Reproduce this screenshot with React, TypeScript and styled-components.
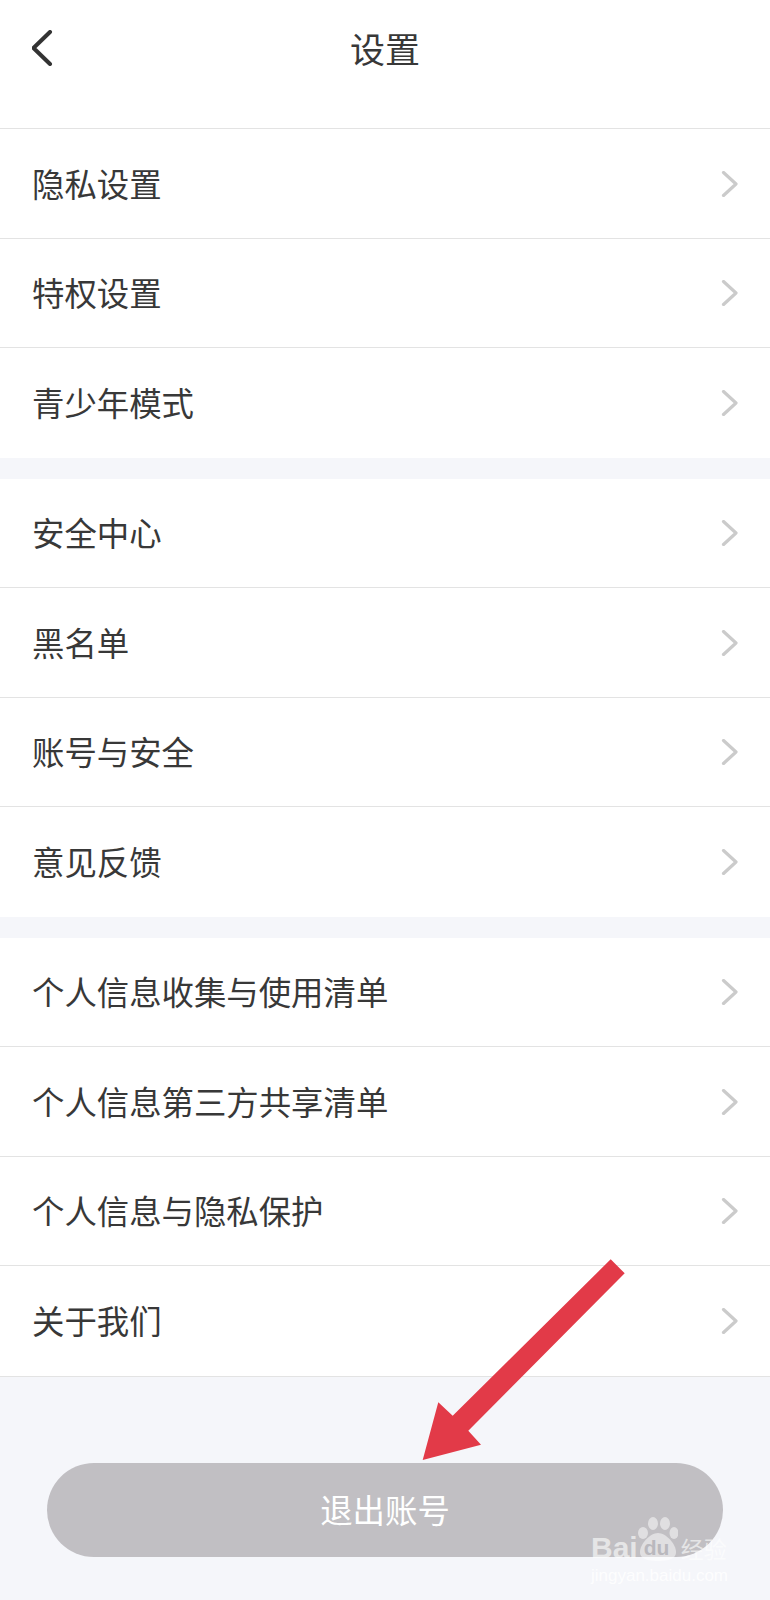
import React from 'react'
import styled, { createGlobalStyle } from 'styled-components'

const sections = [
  ['隐私设置', '特权设置', '青少年模式'],
  ['安全中心', '黑名单', '账号与安全', '意见反馈'],
  ['个人信息收集与使用清单', '个人信息第三方共享清单', '个人信息与隐私保护', '关于我们'],
]

const App = () => {
  return (
    <Page>
      <GlobalStyle />
      <Header>
        <BackButton>
          <svg width="22" height="36" viewBox="0 0 22 36" fill="none">
            <path d="M18 2 L1.5 18 L18 34" stroke="#333" strokeWidth="4" strokeLinecap="round" strokeLinejoin="round" />
          </svg>
        </BackButton>
        <Title>设置</Title>
      </Header>
      {sections.map((rows, index) => (
        <Section key={index}>
          {rows.map((label) => (
            <Row key={label}>
              <RowLabel>{label}</RowLabel>
              <Chevron />
            </Row>
          ))}
        </Section>
      ))}
      <Footer>
        <LogoutButton>退出账号</LogoutButton>
      </Footer>
      <Arrow viewBox="0 0 220 220">
        <polygon
          points="190.7,9.3 204.7,23.3 48.3,180.7 61,194.7 2.7,210 18.3,152.3 32.7,165.7"
          fill="#e23a48"
        />
      </Arrow>
      <Watermark>
        <WatermarkLogo>
          <span>Bai</span>
          <PawMark>
            <svg width="40" height="44" viewBox="0 0 40 44" fill="#fff" fillOpacity="0.5">
              <ellipse cx="15" cy="6.5" rx="5" ry="6.5" />
              <ellipse cx="27" cy="6.5" rx="5" ry="6.5" />
              <ellipse cx="5" cy="16" rx="5" ry="6" />
              <ellipse cx="36" cy="16" rx="4.5" ry="6" />
              <path d="M20 16 C28 16 38 27 38 35 C38 43 28 44 20 44 C12 44 2 43 2 35 C2 27 12 16 20 16 Z" />
            </svg>
            <PawText>du</PawText>
          </PawMark>
          <WatermarkCn>经验</WatermarkCn>
        </WatermarkLogo>
        <WatermarkUrl>jingyan.baidu.com</WatermarkUrl>
      </Watermark>
    </Page>
  )
}

const Chevron = () => (
  <svg width="18" height="26" viewBox="0 0 18 26" fill="none">
    <path d="M2.5 1.5 L15 13 L2.5 24.5" stroke="#cbcbcb" strokeWidth="3.2" strokeLinecap="round" strokeLinejoin="round" />
  </svg>
)

const GlobalStyle = createGlobalStyle`
  html, body {
    margin: 0;
    padding: 0;
    background: #f5f6fa;
  }
  * {
    box-sizing: border-box;
  }
`

const Page = styled.div`
  position: relative;
  width: 770px;
  height: 1600px;
  overflow: hidden;
  background: #f5f6fa;
  font-family: "Noto Sans CJK SC", "Liberation Sans", sans-serif;
  color: #383838;
`

const Header = styled.header`
  height: 129.4px;
  padding: 0 32px 34px;
  display: grid;
  grid-template-columns: 1fr auto 1fr;
  align-items: center;
  background: #fff;
  border-bottom: 1px solid #e3e3e3;
`

const BackButton = styled.div`
  display: flex;
  align-items: center;
  margin-top: 2px;
`

const Title = styled.h1`
  margin: 0;
  font-size: 35px;
  font-weight: 400;
  line-height: 1;
`

const Section = styled.section`
  background: #fff;
  margin-bottom: 21px;

  &:last-of-type {
    margin-bottom: 0;
    border-bottom: 1px solid #e3e3e3;
  }
`

const Row = styled.div`
  height: 109.5px;
  padding: 0 31px 0 32px;
  display: flex;
  align-items: center;
  justify-content: space-between;
  font-size: 32.4px;
  line-height: 1;
  border-bottom: 1px solid #e3e3e3;

  &:last-child {
    border-bottom: none;
  }
`

const RowLabel = styled.span`
  padding-bottom: 1px;
`

const Footer = styled.div`
  padding: 86.6px 47px 0;
`

const LogoutButton = styled.div`
  height: 94px;
  padding-bottom: 3px;
  border-radius: 47px;
  background: #c1bfc3;
  color: #fff;
  font-size: 32.4px;
  display: flex;
  align-items: center;
  justify-content: center;
`

const Arrow = styled.svg`
  position: absolute;
  left: 420px;
  top: 1250px;
  width: 220px;
  height: 220px;
`

const Watermark = styled.div`
  position: absolute;
  left: 591px;
  top: 1517px;
  width: 142px;
  color: rgba(255, 255, 255, 0.6);
`

const WatermarkLogo = styled.div`
  display: flex;
  align-items: flex-end;
  height: 44px;
  font-family: "Liberation Sans", sans-serif;
  font-size: 30px;
  font-weight: 700;
  line-height: 26px;
`

const PawMark = styled.div`
  position: relative;
  width: 40px;
  height: 44px;
`

const PawText = styled.span`
  position: absolute;
  left: 6px;
  bottom: 3px;
  font-size: 21px;
  line-height: 21px;
  color: #b9b8bd;
`

const WatermarkCn = styled.span`
  margin-left: 3px;
  font-family: "Noto Sans CJK SC", sans-serif;
  font-size: 23px;
  font-weight: 400;
  line-height: 26px;
`

const WatermarkUrl = styled.div`
  margin-top: 6px;
  font-family: "Liberation Sans", sans-serif;
  font-size: 17px;
  line-height: 18px;
  white-space: nowrap;
  color: rgba(255, 255, 255, 0.85);
`

export default App
